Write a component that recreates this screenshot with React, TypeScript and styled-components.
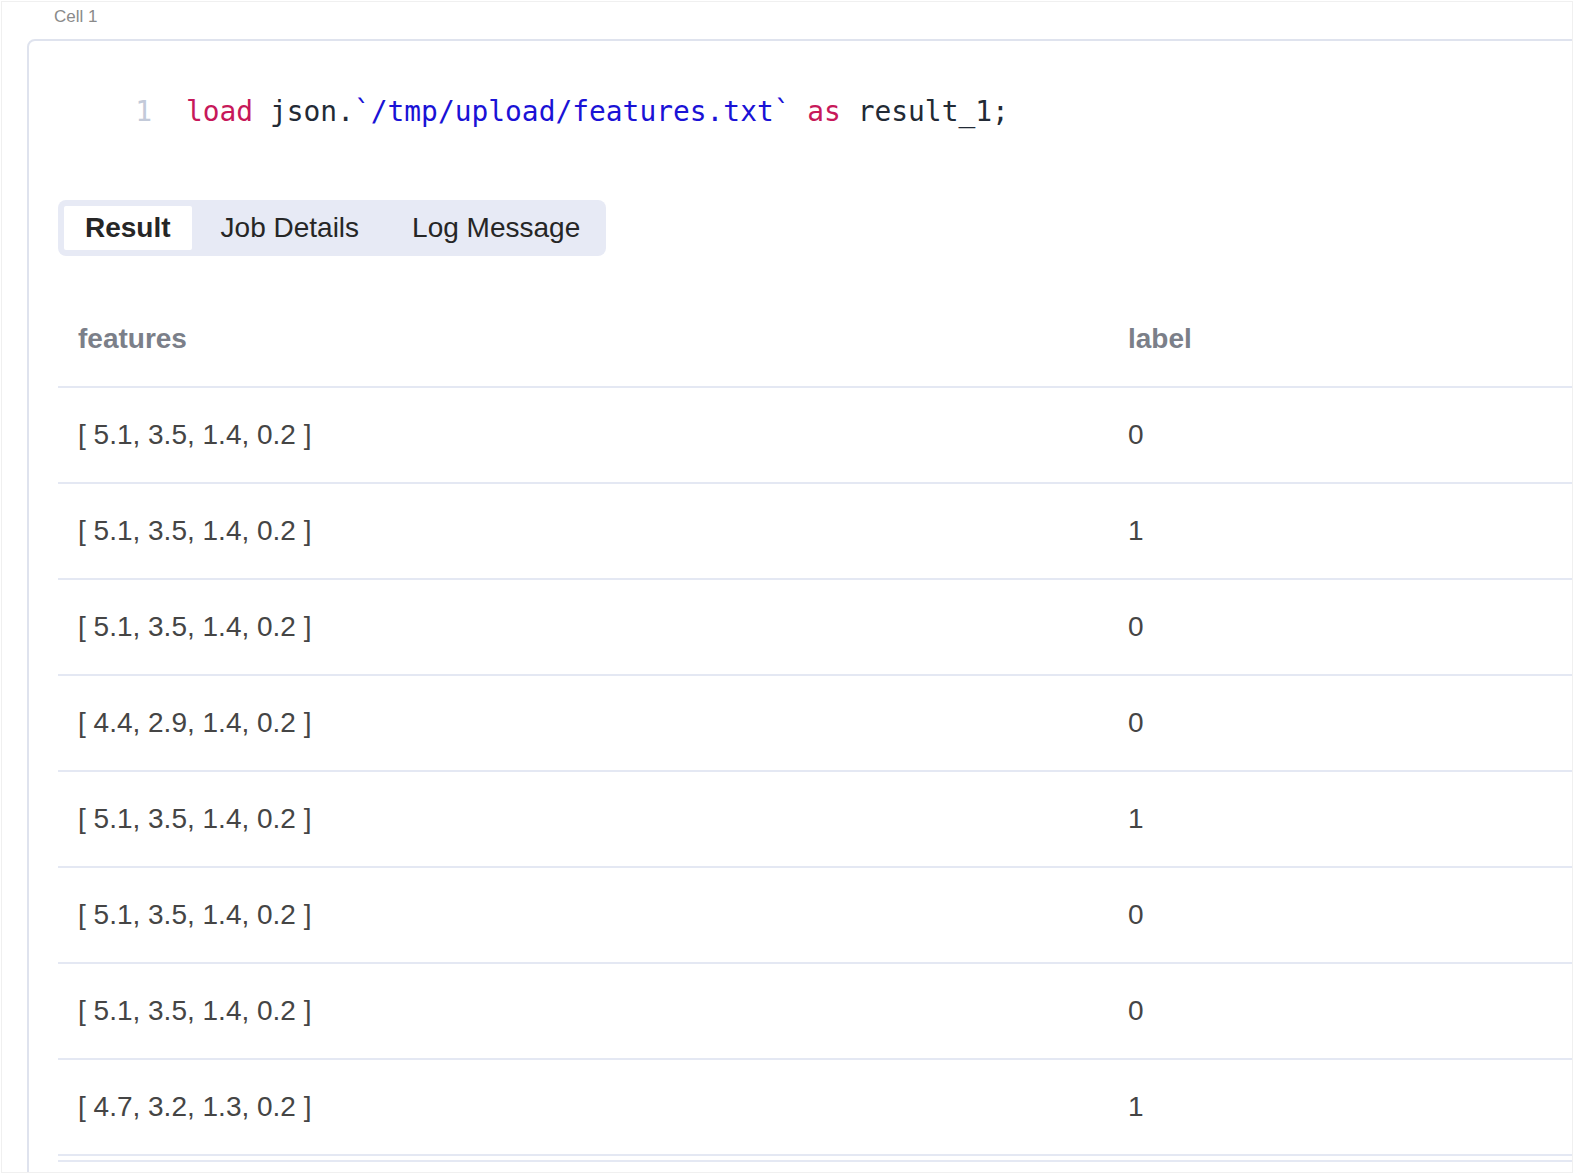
import React from "react";
import styled, { createGlobalStyle } from "styled-components";

const Global = createGlobalStyle`
  html, body { margin: 0; padding: 0; background: #ffffff; }
  body { font-family: "Liberation Sans", Arial, sans-serif; }
  * { box-sizing: border-box; }
`;

const Frame = styled.div`
  margin: 1px 0 0 1px;
  width: 1572px;
  height: 1172px;
  border: 1px solid #f0f0f0;
  overflow: hidden;
  padding-top: 5px;
`;

const CellLabel = styled.div`
  margin-left: 52px;
  font-size: 17px;
  line-height: 20px;
  color: #8a8a8a;
`;

const Card = styled.div`
  margin: 12px 0 0 25px;
  width: 1600px;
  border: 2px solid #dfe3ee;
  border-radius: 8px;
  padding: 51px 0 0 29px;
  min-height: 1200px;
`;

const CodeLine = styled.div`
  display: flex;
  align-items: center;
  margin-left: -29px;
  font-family: "DejaVu Sans Mono", "Liberation Mono", monospace;
  font-size: 27.9px;
  line-height: 40px;
  color: #222a35;
`;

const Gutter = styled.span`
  width: 123px;
  text-align: right;
  color: #c3cad9;
  margin-right: 34px;
`;

const Tok = styled.span<{ $kind?: "kw" | "str" }>`
  color: ${(p) => (p.$kind === "kw" ? "#c7185a" : p.$kind === "str" ? "#1a12d6" : "#222a35")};
  white-space: pre;
`;

const Tabs = styled.div`
  display: inline-flex;
  align-items: stretch;
  margin-top: 68px;
  height: 56px;
  padding: 6px 2px 6px 6px;
  gap: 5px;
  background: #e7eaf5;
  border-radius: 8px;
`;

const Tab = styled.div<{ $active?: boolean }>`
  display: flex;
  align-items: center;
  padding: 0 ${(p) => (p.$active ? 21 : 24)}px;
  font-size: 28px;
  font-weight: ${(p) => (p.$active ? 700 : 400)};
  color: #262626;
  background: ${(p) => (p.$active ? "#ffffff" : "transparent")};
  border-radius: 2px;
`;

const Table = styled.div`
  margin-top: 36px;
  width: 1600px;
`;

const Row = styled.div<{ $head?: boolean }>`
  display: grid;
  grid-template-columns: 1050px 1fr;
  height: 96px;
  align-items: center;
  border-bottom: 2px solid #e4e8f3;
  font-size: 28px;
  font-weight: ${(p) => (p.$head ? 700 : 400)};
  color: ${(p) => (p.$head ? "#7b7f89" : "#454545")};
`;

const Cell = styled.div`
  padding-left: 20px;
`;

const TailLine = styled.div`
  margin-top: 4px;
  width: 1600px;
  height: 2px;
  background: #e4e8f3;
`;

const rows: [string, string][] = [
  ["[ 5.1, 3.5, 1.4, 0.2 ]", "0"],
  ["[ 5.1, 3.5, 1.4, 0.2 ]", "1"],
  ["[ 5.1, 3.5, 1.4, 0.2 ]", "0"],
  ["[ 4.4, 2.9, 1.4, 0.2 ]", "0"],
  ["[ 5.1, 3.5, 1.4, 0.2 ]", "1"],
  ["[ 5.1, 3.5, 1.4, 0.2 ]", "0"],
  ["[ 5.1, 3.5, 1.4, 0.2 ]", "0"],
  ["[ 4.7, 3.2, 1.3, 0.2 ]", "1"],
];

export default function App() {
  return (
    <>
      <Global />
      <Frame>
        <CellLabel>Cell 1</CellLabel>
        <Card>
          <CodeLine>
            <Gutter>1</Gutter>
            <Tok $kind="kw">load</Tok>
            <Tok> json.</Tok>
            <Tok $kind="str">`/tmp/upload/features.txt`</Tok>
            <Tok> </Tok>
            <Tok $kind="kw">as</Tok>
            <Tok> result_1;</Tok>
          </CodeLine>
          <Tabs>
            <Tab $active>Result</Tab>
            <Tab>Job Details</Tab>
            <Tab>Log Message</Tab>
          </Tabs>
          <Table>
            <Row $head>
              <Cell>features</Cell>
              <Cell>label</Cell>
            </Row>
            {rows.map((r, i) => (
              <Row key={i}>
                <Cell>{r[0]}</Cell>
                <Cell>{r[1]}</Cell>
              </Row>
            ))}
          </Table>
          <TailLine />
        </Card>
      </Frame>
    </>
  );
}
